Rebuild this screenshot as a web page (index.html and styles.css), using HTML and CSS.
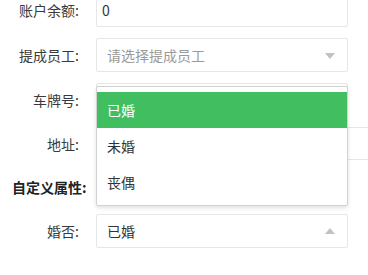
FILE: index.html
```html
<!DOCTYPE html>
<html lang="zh-CN">
<head>
<meta charset="utf-8">
<title>表单</title>
<link rel="stylesheet" href="styles.css">
</head>
<body>
<div class="form">
  <div class="item item--loose">
    <div class="label">账户余额:</div>
    <div class="field"><div class="input input--text">0</div></div>
  </div>
  <div class="item item--loose">
    <div class="label">提成员工:</div>
    <div class="field"><div class="input input--select placeholder">请选择提成员工<span class="arrow arrow--down"></span></div></div>
  </div>
  <div class="item">
    <div class="label">车牌号:</div>
    <div class="field"><div class="input input--text"></div></div>
  </div>
  <div class="item">
    <div class="label">地址:</div>
    <div class="field field--wide"><div class="input input--addr"></div></div>
  </div>
  <div class="item heading">自定义属性:</div>
  <div class="item">
    <div class="label">婚否:</div>
    <div class="field field--open">
      <div class="input input--select">已婚<span class="arrow arrow--up"></span></div>
      <ul class="dropdown">
        <li class="option option--active">已婚</li>
        <li class="option">未婚</li>
        <li class="option">丧偶</li>
      </ul>
    </div>
  </div>
</div>
</body>
</html>
```

FILE: styles.css
```css
html, body {
  margin: 0;
  padding: 0;
  background: #fff;
  overflow: hidden;
}
body {
  font-family: "Noto Sans CJK SC", "Noto Sans", sans-serif;
  font-size: 14px;
  color: #333;
}
.form {
  margin-top: -7px;
}
.item {
  display: flex;
  align-items: center;
  margin-bottom: 10px;
}
.item--loose {
  margin-bottom: 11px;
}
.label {
  flex: none;
  width: 79px;
  padding-right: 17px;
  text-align: right;
  color: #3a3a3a;
  line-height: 20px;
}
.field {
  flex: none;
  width: 252px;
  position: relative;
}
.field--wide {
  width: 272px;
}
.input {
  box-sizing: border-box;
  height: 34px;
  line-height: 32px;
  border: 1px solid #e6e6e6;
  border-radius: 2px;
  background: #fff;
  position: relative;
  white-space: nowrap;
}
.input--text {
  padding-left: 5px;
}
.input--select {
  padding-left: 10px;
}
.input--addr {
  height: 33px;
  border-right: none;
  border-radius: 2px 0 0 2px;
}
.placeholder {
  color: #9a9a9a;
}
.arrow {
  position: absolute;
  right: 12px;
  width: 0;
  height: 0;
  border-left: 5px solid transparent;
  border-right: 5px solid transparent;
}
.arrow--down {
  top: 14px;
  border-top: 6px solid #c2c2c2;
}
.arrow--up {
  top: 13px;
  border-bottom: 6px solid #c2c2c2;
}
.heading {
  height: 34px;
  padding-left: 12px;
  font-weight: 700;
  color: #222;
}
.dropdown {
  position: absolute;
  left: 0;
  right: 0;
  bottom: calc(100% + 8px);
  margin: 0;
  padding: 5px 0;
  list-style: none;
  background: #fff;
  border: 1px solid #d2d2d2;
  border-radius: 2px;
  box-shadow: 0 2px 4px rgba(0, 0, 0, 0.12);
  z-index: 10;
}
.option {
  height: 36px;
  line-height: 36px;
  padding-left: 10px;
  color: #333;
}
.option--active {
  background: #41bf60;
  color: #fff;
}
```
